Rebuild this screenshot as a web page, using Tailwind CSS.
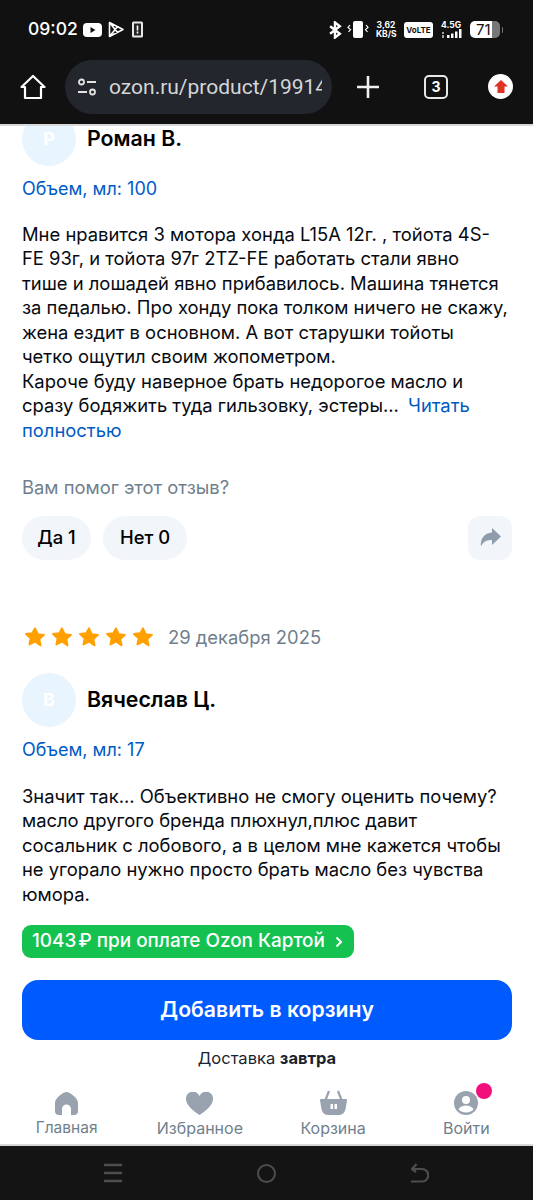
<!DOCTYPE html>
<html lang="ru">
<head>
    <meta charset="UTF-8">
    <meta name="viewport" content="width=device-width, initial-scale=1.0">
    <script src="https://cdn.jsdelivr.net/npm/@tailwindcss/browser@4"></script>
    <title>Отзывы</title>
</head>
<body class="bg-white font-['Inter',sans-serif]">
<div class="w-[533px] h-[1200px] flex flex-col overflow-hidden">

    <!-- status bar + browser toolbar -->
    <header class="h-[126px] shrink-0 bg-[#111112] border-b-2 border-[#d8d8d8] text-white">
        <div class="h-[59px] pl-[28px] pr-[30px] flex items-center justify-between">
            <div class="flex items-center gap-[5px]">
                <span class="text-[17.5px] font-medium">09:02</span>
                <svg class="w-[19px] h-[14px]" viewBox="0 0 19 14"><rect width="19" height="14" rx="4" fill="#fff"/><path d="M7.500 4v6l5-3z" fill="#111"/></svg>
                <svg class="w-[16px] h-[17px] ml-[1px]" viewBox="0 0 16 17" fill="none" stroke="#fff" stroke-width="1.600" stroke-linejoin="round"><path d="M1.500 1.500v14L15 8.500zM1.500 1.500l8 10M1.500 15.500l8-10"/></svg>
                <svg class="w-[11px] h-[17px] ml-[3px]" viewBox="0 0 11 16"><rect width="11" height="16" rx="1.500" fill="#e8e8e8"/><rect x="2" y="2" width="7" height="12" fill="#222"/><path d="M4.700 4h1.600v5H4.700zM4.700 10h1.600v2H4.700z" fill="#fff"/></svg>
            </div>
            <div class="flex items-center">
                <svg class="w-[13px] h-[18px]" viewBox="0 0 12 16" fill="none" stroke="#fff" stroke-width="2.200"><path d="M1 4.500l9 7-4.500 3.500V1L10 4.500l-9 7"/></svg>
                <svg class="w-[22px] h-[17px] ml-[5px]" viewBox="0 0 22 17"><rect x="6" y="0" width="10" height="17" rx="2" fill="#fff"/><path d="M3 4L1 6.500l2.500 2L1.500 11M19 4l2 2.500-2.500 2 2 2.500" fill="none" stroke="#fff" stroke-width="1.200"/></svg>
                <div class="ml-[7px] w-[20px] font-bold text-[8.5px] leading-[9px] text-center whitespace-nowrap">3,62<br>KB/S</div>
                <div class="ml-[8px] w-[29px] h-[16px] rounded-[3px] bg-white text-[#111] text-[8px] font-bold flex items-center justify-center">VoLTE</div>
                <div class="ml-[8px] w-[23px] flex flex-col">
                    <span class="text-[8.5px] leading-[8px] font-bold">4.5G</span>
                    <svg class="w-[23px] h-[9px]" viewBox="0 0 23 9" fill="#fff"><rect x="1" y="3" width="2" height="2" opacity=".6"/><rect x="1" y="6" width="2" height="3" opacity=".6"/><rect x="6" y="6" width="2.500" height="3"/><rect x="10" y="4.500" width="2.500" height="4.500"/><rect x="14" y="2.500" width="2.500" height="6.500"/><rect x="18" y="0" width="2.500" height="9"/></svg>
                </div>
                <div class="ml-[6px] flex items-center">
                    <div class="w-[30px] h-[17px] rounded-[5px] bg-[linear-gradient(90deg,#fff_72%,#777_72%)] text-[#111] text-[15px] font-normal leading-[17px] pl-[6px]">71</div>
                    <div class="w-[1.500px] h-[6px] ml-[1.500px] bg-[#777] rounded-r"></div>
                </div>
            </div>
        </div>
        <div class="h-[55px] pl-[20px] flex items-center">
            <svg class="w-[26px] h-[26px] shrink-0" viewBox="0 0 26 26" fill="none" stroke="#fff" stroke-width="2.200" stroke-linejoin="round"><path d="M1.500 13L13 2l11.500 11H21v11H5V13z"/></svg>
            <div class="ml-[19px] w-[267px] h-[54px] rounded-[27px] bg-[#23262d] flex items-center pl-[12px] pr-[10px]">
                <svg class="w-[20px] h-[18px] shrink-0" viewBox="0 0 20 18" fill="none" stroke="#e3e3e3" stroke-width="1.800"><circle cx="4.500" cy="4" r="2.500"/><path d="M10 4h9M1 14h9"/><circle cx="15.500" cy="14" r="2.500"/></svg>
                <span class="ml-[12px] text-[21px] leading-[30px] text-[#d5d6d8] whitespace-nowrap font-['Roboto',sans-serif] overflow-hidden">ozon.ru/product/19914</span>
            </div>
            <svg class="ml-[25px] w-[22px] h-[22px] shrink-0" viewBox="0 0 22 22" stroke="#f0f0f0" stroke-width="2.600"><path d="M11 0v22M0 11h22"/></svg>
            <div class="ml-[45px] w-[24px] h-[24px] shrink-0 rounded-[5px] border-[2.500px] border-[#e8e8e8] flex items-center justify-center text-[14px] font-bold">3</div>
            <div class="ml-[40px] w-[25px] h-[25px] shrink-0 rounded-full bg-white flex items-center justify-center">
                <svg class="w-[14px] h-[13px]" viewBox="0 0 14 13" fill="#de3226"><path d="M7 0l7 6.500h-3.500V13h-7V6.500H0z"/></svg>
            </div>
        </div>
    </header>

    <!-- reviews -->
    <main class="flex-1 min-h-0 overflow-hidden pl-[22px] pr-[21px] text-[18.4px] leading-[24.5px] text-[#070b11] font-['Inter',sans-serif]">
        <div class="flex items-center gap-[11px] -mt-[14px]">
            <div class="w-[54px] h-[54px] rounded-full bg-[#e8f5ff] text-white text-[18px] font-bold flex items-center justify-center">Р</div>
            <span class="text-[21.3px] font-semibold text-black -mt-[1px]">Роман В.</span>
        </div>
        <div class="mt-[11px] text-[18px] text-[#005bc4]">Объем, мл: 100</div>
        <p class="mt-[20px]">
            Мне нравится 3 мотора хонда L15A 12г. , тойота 4S-<br>FE 93г, и тойота 97г 2TZ-FE работать стали явно<br>тише и лошадей явно прибавилось. Машина тянется<br>за педалью. Про хонду пока толком ничего не скажу,<br>жена ездит в основном. А вот старушки тойоты<br>четко ощутил своим жопометром.<br>
            Кароче буду наверное брать недорогое масло и<br>сразу бодяжить туда гильзовку, эстеры... <span class="ml-[4px] text-[#005bc4]">Читать полностью</span>
        </p>
        <div class="mt-[33px] text-[#707f8d]">Вам помог этот отзыв?</div>
        <div class="mt-[16px] flex items-center">
            <button class="h-[44px] w-[69px] rounded-[22px] bg-[#f2f5f9] font-medium text-black">Да 1</button>
            <button class="h-[44px] w-[84px] ml-[12px] rounded-[22px] bg-[#f2f5f9] font-medium text-black">Нет 0</button>
            <button class="ml-auto w-[44px] h-[44px] rounded-[12px] bg-[#f2f5f9] flex items-center justify-center">
                <svg class="w-[21px] h-[19px]" viewBox="0 0 21 19" fill="#8f9cab"><path d="M12 0l9 8.500-9 8.500v-5C6 12 3 14 1 18.500 0 11 4 5 12 4.500z"/></svg>
            </button>
        </div>
        <div class="mt-[65px] flex items-center">
            <div class="flex gap-[5px] ml-[2px]">
                <svg class="w-[22px] h-[22px]" viewBox="0 0 24 24" fill="#ffa000" stroke="#ffa000" stroke-width="2" stroke-linejoin="round"><path d="M12 2.500l3 6.300 6.800.9-5 4.700 1.300 6.800L12 17l-6.100 3.200 1.300-6.800-5-4.700 6.800-.9z"/></svg>
                <svg class="w-[22px] h-[22px]" viewBox="0 0 24 24" fill="#ffa000" stroke="#ffa000" stroke-width="2" stroke-linejoin="round"><path d="M12 2.500l3 6.300 6.800.9-5 4.700 1.300 6.800L12 17l-6.100 3.200 1.300-6.800-5-4.700 6.800-.9z"/></svg>
                <svg class="w-[22px] h-[22px]" viewBox="0 0 24 24" fill="#ffa000" stroke="#ffa000" stroke-width="2" stroke-linejoin="round"><path d="M12 2.500l3 6.300 6.800.9-5 4.700 1.300 6.800L12 17l-6.100 3.200 1.300-6.800-5-4.700 6.800-.9z"/></svg>
                <svg class="w-[22px] h-[22px]" viewBox="0 0 24 24" fill="#ffa000" stroke="#ffa000" stroke-width="2" stroke-linejoin="round"><path d="M12 2.500l3 6.300 6.800.9-5 4.700 1.300 6.800L12 17l-6.100 3.200 1.300-6.800-5-4.700 6.800-.9z"/></svg>
                <svg class="w-[22px] h-[22px]" viewBox="0 0 24 24" fill="#ffa000" stroke="#ffa000" stroke-width="2" stroke-linejoin="round"><path d="M12 2.500l3 6.300 6.800.9-5 4.700 1.300 6.800L12 17l-6.100 3.200 1.300-6.800-5-4.700 6.800-.9z"/></svg>
            </div>
            <span class="ml-[14px] text-[#707f8d]">29 декабря 2025</span>
        </div>
        <div class="mt-[24px] flex items-center gap-[11px]">
            <div class="w-[54px] h-[54px] rounded-full bg-[#e8f5ff] text-white text-[18px] font-bold flex items-center justify-center">В</div>
            <span class="text-[21.3px] font-semibold text-black -mt-[1px]">Вячеслав Ц.</span>
        </div>
        <div class="mt-[11px] text-[18px] text-[#005bc4]">Объем, мл: 17</div>
        <p class="mt-[21px]">Значит так... Объективно не смогу оценить почему? масло другого бренда плюхнул,плюс давит сосальник с лобового, а в целом мне кажется чтобы не угорало нужно просто брать масло без чувства юмора.</p>
    </main>

    <!-- buy panel -->
    <section class="shrink-0 pl-[22px] pr-[21px]">
        <div class="h-[33px] w-[332px] rounded-[9px] bg-[#16c24f] text-white text-[18.9px] font-medium flex items-center pl-[10px] whitespace-nowrap">1043<span class="ml-[2px]">₽</span>&nbsp;при оплате Ozon Картой
            <svg class="ml-[10px] w-[8px] h-[12px] shrink-0" viewBox="0 0 8 12" fill="none" stroke="#fff" stroke-width="2"><path d="M1.500 1.500L6 6l-4.500 4.500"/></svg>
        </div>
        <button class="mt-[22px] w-full h-[60px] rounded-[16px] bg-[#005bff] text-white text-[21.2px] font-semibold">Добавить в корзину</button>
        <div class="mt-[8px] text-center text-[16.5px] leading-[20px] text-[#1b2330]">Доставка <b class="font-bold">завтра</b></div>
    </section>

    <!-- tab bar -->
    <nav class="shrink-0 h-[70px] mt-[8px] grid grid-cols-4 text-[16px] leading-[20px] text-[#707f8d] border-b-2 border-[#d8d8d8]">
        <div class="flex flex-col items-center pt-[16px]">
            <svg class="w-[23px] h-[23px]" viewBox="0 0 23 23" fill="#98a3af"><path d="M11.500 0C15 0 23 6 23 11v8a4 4 0 0 1-4 4h-3v-6a4.500 4.500 0 0 0-9 0v6H4a4 4 0 0 1-4-4v-8C0 6 8 0 11.500 0z"/></svg>
            <span class="mt-[3px] text-[15.5px]">Главная</span>
        </div>
        <div class="flex flex-col items-center pt-[16px]">
            <svg class="w-[27px] h-[23px]" viewBox="0 0 27 23" fill="#98a3af"><path d="M13.500 23C9 20 0 14 0 7a7 7 0 0 1 13.500-3A7 7 0 0 1 27 7c0 7-9 13-13.500 16z"/></svg>
            <span class="mt-[3px]">Избранное</span>
        </div>
        <div class="flex flex-col items-center pt-[14px]">
            <svg class="w-[27px] h-[25px]" viewBox="0 0 27 25" fill="#98a3af"><path d="M1 9h25a1 1 0 0 1 1 1.200l-1.500 9A7 7 0 0 1 18.500 25h-10a7 7 0 0 1-7-5.800L0 10.200A1 1 0 0 1 1 9z"/><path d="M5.500 10l3.500-9M21.500 10l-3.500-9" stroke="#98a3af" stroke-width="2.200" fill="none"/><path d="M10.500 14h2.500v5h-2.500zM14.500 14H17v5h-2.500z" fill="#fff"/></svg>
            <span class="mt-[3px]">Корзина</span>
        </div>
        <div class="relative flex flex-col items-center pt-[15px]">
            <svg class="w-[24px] h-[24px]" viewBox="0 0 24 24"><circle cx="12" cy="12" r="12" fill="#98a3af"/><circle cx="12" cy="9" r="4" fill="#fff"/><path d="M4.500 18.500C6 15.500 9 14.500 12 14.500s6 1 7.500 4c-2 2-4.500 3-7.500 3s-5.500-1-7.500-3z" fill="#fff"/></svg>
            <div class="absolute left-[76px] top-[7px] w-[16px] h-[16px] rounded-full bg-[#f10f7c]"></div>
            <span class="mt-[3px]">Войти</span>
        </div>
    </nav>

    <!-- android nav -->
    <footer class="shrink-0 h-[54px] bg-[#141414] flex items-center justify-center gap-[135px]">
        <svg class="w-[18px] h-[20px]" viewBox="0 0 18 20" stroke="#4d4d4d" stroke-width="2.400"><path d="M0 2h18M0 10h18M0 18h18"/></svg>
        <div class="w-[19px] h-[19px] rounded-full border-[2.400px] border-[#4d4d4d]"></div>
        <svg class="w-[18px] h-[20px]" viewBox="0 0 18 20" fill="none" stroke="#4d4d4d" stroke-width="2.200"><path d="M0 18.500h11a6 6 0 0 0 0-12.500H1M5.500 1L1 6l4 3"/></svg>
    </footer>
</div>
</body>
</html>
